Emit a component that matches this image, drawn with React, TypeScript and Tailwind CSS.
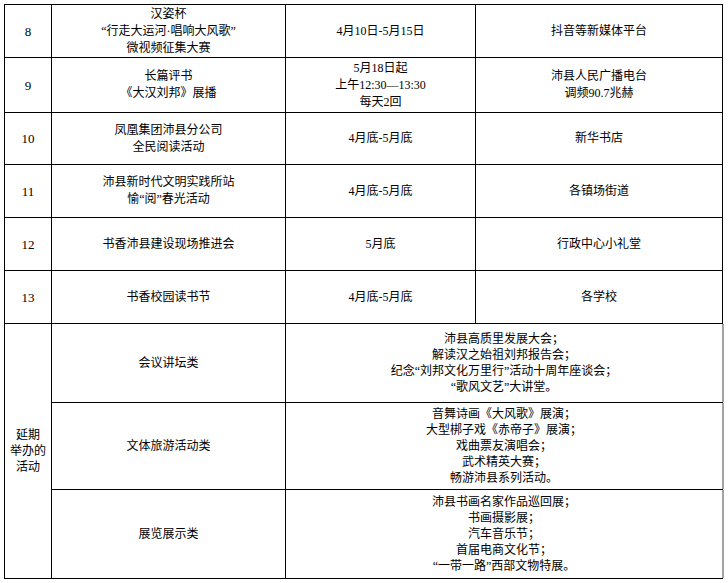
import type { ReactNode } from 'react';

interface ScheduleRow {
  no: string;
  name: string[];
  time: string[];
  place: string[];
}

interface DeferredGroup {
  kind: string;
  items: string[];
}

const ROWS: ScheduleRow[] = [
  {
    no: '8',
    name: ['汉姿杯', '“行走大运河·唱响大风歌”', '微视频征集大赛'],
    time: ['4月10日-5月15日'],
    place: ['抖音等新媒体平台'],
  },
  {
    no: '9',
    name: ['长篇评书', '《大汉刘邦》展播'],
    time: ['5月18日起', '上午12:30—13:30', '每天2回'],
    place: ['沛县人民广播电台', '调频90.7兆赫'],
  },
  {
    no: '10',
    name: ['凤凰集团沛县分公司', '全民阅读活动'],
    time: ['4月底-5月底'],
    place: ['新华书店'],
  },
  {
    no: '11',
    name: ['沛县新时代文明实践所站', '愉“阅”春光活动'],
    time: ['4月底-5月底'],
    place: ['各镇场街道'],
  },
  {
    no: '12',
    name: ['书香沛县建设现场推进会'],
    time: ['5月底'],
    place: ['行政中心小礼堂'],
  },
  {
    no: '13',
    name: ['书香校园读书节'],
    time: ['4月底-5月底'],
    place: ['各学校'],
  },
];

const DEFERRED: DeferredGroup[] = [
  {
    kind: '会议讲坛类',
    items: ['沛县高质里发展大会；', '解读汉之始祖刘邦报告会；', '纪念“刘邦文化万里行”活动十周年座谈会；', '“歌风文艺”大讲堂。'],
  },
  {
    kind: '文体旅游活动类',
    items: ['音舞诗画《大风歌》展演；', '大型梆子戏《赤帝子》展演；', '戏曲票友演唱会；', '武术精英大赛；', '畅游沛县系列活动。'],
  },
  {
    kind: '展览展示类',
    items: ['沛县书画名家作品巡回展；', '书画摄影展；', '汽车音乐节；', '首届电商文化节；', '“一带一路”西部文物特展。'],
  },
];

function Cell({ children, className = '' }: { children: ReactNode; className?: string }) {
  return (
    <div className={`flex flex-col items-center justify-center bg-white text-center ${className}`}>
      {children}
    </div>
  );
}

function Lines({ lines }: { lines: string[] }) {
  return (
    <>
      {lines.map((line, i) => (
        <div key={i} className="whitespace-nowrap">
          {line}
        </div>
      ))}
    </>
  );
}

export default function App() {
  return (
    <div className="min-h-[583px] w-[728px] bg-white pl-[4px] pt-[4px] font-['Liberation_Serif','Noto_Sans_CJK_SC',serif] text-[12px] text-black">
      <div className="grid w-fit grid-cols-[46px_233px_189px_246px] grid-rows-[52px_54px_51px_52px_52px_52px_78px_86px_88px] gap-px bg-black p-px">
        {ROWS.map((row) => (
          <div key={row.no} className="contents leading-[17px]">
            <Cell className="text-[13px]">{row.no}</Cell>
            <Cell>
              <Lines lines={row.name} />
            </Cell>
            <Cell>
              <Lines lines={row.time} />
            </Cell>
            <Cell>
              <Lines lines={row.place} />
            </Cell>
          </div>
        ))}

        {/* 延期举办 */}
        <Cell className="row-span-3 leading-[16px]">
          <Lines lines={['延期', '举办的', '活动']} />
        </Cell>
        {DEFERRED.map((group) => (
          <div key={group.kind} className="contents leading-[16px]">
            <Cell>{group.kind}</Cell>
            <Cell className="col-span-2 shadow-[2px_0_0_#a3a3a3]">
              <Lines lines={group.items} />
            </Cell>
          </div>
        ))}
      </div>
    </div>
  );
}
